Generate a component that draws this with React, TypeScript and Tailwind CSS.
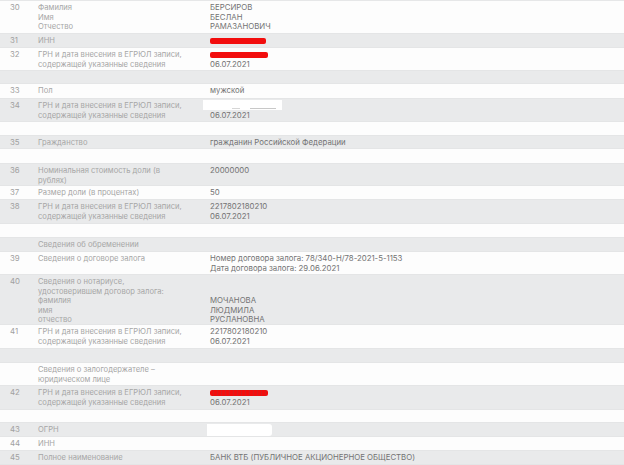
import type { ReactNode } from "react";
import clsx from "clsx";

type RowProps = {
    n?: string;
    label?: string[];
    value?: ReactNode;
    h: number;
    gray?: boolean;
};

const heights: Record<number, string> = {
    13: "h-[13px]",
    14: "h-[14px]",
    15: "h-[15px]",
    22: "h-[22px]",
    23: "h-[23px]",
    24: "h-[24px]",
    33: "h-[33px]",
    50: "h-[50px]",
};

function Lines({ lines, className }: { lines: string[]; className?: string }) {
    return (
        <div className={className}>
            {lines.map((l, i) => (
                <div key={i} className="h-[9.5px] whitespace-nowrap">
                    {l || "\u00a0"}
                </div>
            ))}
        </div>
    );
}

function Row({ n, label, value, h, gray }: RowProps) {
    return (
        <div
            className={clsx(
                "flex items-start pt-[2px] leading-[9.5px] border-b border-[#e4e5e6]",
                heights[h],
                gray ? "bg-[#e9eaeb]" : "bg-[#fdfdfd]"
            )}
        >
            <div className="w-[38px] shrink-0 pl-[10px] text-[7.8px] text-[#a0a0a0]">{n}</div>
            <div className="w-[172px] shrink-0 text-[7.6px] text-[#a6a6a6]">
                {label && <Lines lines={label} />}
            </div>
            <div className="relative flex-1 text-[7.8px] text-[#737373]">{value}</div>
        </div>
    );
}

const grn = ["ГРН и дата внесения в ЕГРЮЛ записи,", "содержащей указанные сведения"];

function RedBar({ w = 57, dotted = false }: { w?: number; dotted?: boolean }) {
    return (
        <div className="h-[9.5px] flex items-center">
            <div
                className={clsx(
                    "h-[6px] rounded-[2px] bg-[#f20d0d]",
                    dotted && "bg-[repeating-linear-gradient(90deg,#f20d0d_0,#f20d0d_3px,#d81b1b_3px,#d81b1b_4px)]"
                )}
                style={{ width: w }}
            />
        </div>
    );
}

export default function App() {
    return (
        <div
            className="w-[624px] h-[465px] overflow-hidden bg-white border-t border-[#e6e7e8]"
            style={{ fontFamily: "Inter, 'Noto Sans', sans-serif" }}
        >
            <Row
                n="30"
                label={["Фамилия", "Имя", "Отчество"]}
                value={<Lines lines={["БЕРСИРОВ", "БЕСЛАН", "РАМАЗАНОВИЧ"]} />}
                h={33}
            />
            <Row n="31" label={["ИНН"]} value={<RedBar w={56} />} h={14} gray />
            <Row
                n="32"
                label={grn}
                value={
                    <>
                        <RedBar w={58} />
                        <Lines lines={["06.07.2021"]} />
                    </>
                }
                h={23}
            />
            <Row h={13} gray />
            <Row n="33" label={["Пол"]} value={<Lines lines={["мужской"]} />} h={15} />
            <Row
                n="34"
                label={grn}
                value={
                    <>
                        <div className="relative h-[9.5px]">
                            <div className="absolute left-[-7px] top-[-1px] w-[79px] h-[10px] bg-white" />
                            <div className="absolute left-[40px] top-[7px] w-[26px] h-[1px] bg-[#c8c8c8]" />
                            <div className="absolute left-[22px] top-[7px] w-[8px] h-[1px] bg-[#d6d6d6]" />
                        </div>
                        <Lines lines={["06.07.2021"]} />
                    </>
                }
                h={23}
                gray
            />
            <Row h={14} />
            <Row
                n="35"
                label={["Гражданство"]}
                value={<Lines lines={["гражданин Российской Федерации"]} />}
                h={13}
                gray
            />
            <Row h={15} />
            <Row
                n="36"
                label={["Номинальная стоимость доли (в", "рублях)"]}
                value={<Lines lines={["20000000"]} />}
                h={22}
                gray
            />
            <Row n="37" label={["Размер доли (в процентах)"]} value={<Lines lines={["50"]} />} h={14} />
            <Row
                n="38"
                label={grn}
                value={<Lines lines={["2217802180210", "06.07.2021"]} />}
                h={24}
                gray
            />
            <Row h={14} />
            <Row label={["Сведения об обременении"]} h={14} gray />
            <Row
                n="39"
                label={["Сведения о договоре залога"]}
                value={
                    <Lines
                        lines={[
                            "Номер договора залога: 78/340-Н/78-2021-5-1153",
                            "Дата договора залога: 29.06.2021",
                        ]}
                    />
                }
                h={23}
            />
            <Row
                n="40"
                label={[
                    "Сведения о нотариусе,",
                    "удостоверившем договор залога:",
                    "фамилия",
                    "имя",
                    "отчество",
                ]}
                value={<Lines lines={["", "", "МОЧАНОВА", "ЛЮДМИЛА", "РУСЛАНОВНА"]} />}
                h={50}
                gray
            />
            <Row
                n="41"
                label={grn}
                value={<Lines lines={["2217802180210", "06.07.2021"]} />}
                h={24}
            />
            <Row h={14} gray />
            <Row label={["Сведения о залогодержателе –", "юридическом лице"]} h={23} />
            <Row
                n="42"
                label={grn}
                value={
                    <>
                        <RedBar w={58} dotted />
                        <Lines lines={["06.07.2021"]} />
                    </>
                }
                h={24}
                gray
            />
            <Row h={13} />
            <Row
                n="43"
                label={["ОГРН"]}
                value={
                    <div className="relative h-[9.5px]">
                        <div className="absolute left-[-3px] top-[-1px] w-[65px] h-[12px] bg-white rounded-r-[3px]" />
                    </div>
                }
                h={14}
                gray
            />
            <Row n="44" label={["ИНН"]} h={14} />
            <Row
                n="45"
                label={["Полное наименование"]}
                value={<Lines lines={["БАНК ВТБ (ПУБЛИЧНОЕ АКЦИОНЕРНОЕ ОБЩЕСТВО)"]} />}
                h={14}
                gray
            />
        </div>
    );
}
